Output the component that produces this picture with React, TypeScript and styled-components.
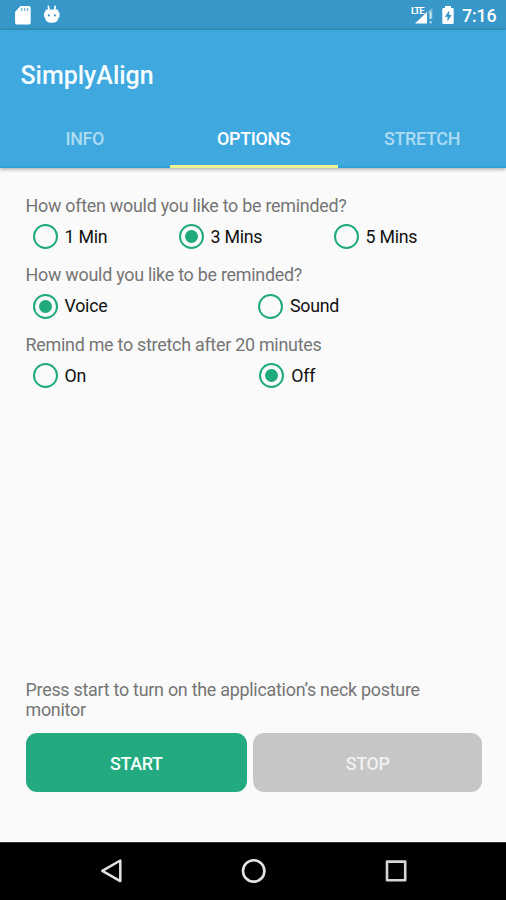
import React, { useState } from "react";
import styled, { createGlobalStyle } from "styled-components";

const GlobalStyle = createGlobalStyle`
  * { box-sizing: border-box; }
  body { margin: 0; font-family: Roboto, sans-serif; background: #fafafa; }
  button { font: inherit; border: 0; padding: 0; background: none; }
`;

const Screen = styled.div`
  width: 506px;
  height: 900px;
  display: flex;
  flex-direction: column;
  overflow: hidden;
  background: #fafafa;
`;

const StatusBar = styled.header`
  height: 30px;
  flex: none;
  display: flex;
  align-items: center;
  justify-content: space-between;
  padding: 0 9px 0 13px;
  background: #3697c8;
  color: #fff;
`;

const StatusIcons = styled.div`
  display: flex;
  align-items: center;
`;

const IconPair = styled(StatusIcons)`
  gap: 10px;
`;

const SignalGroup = styled.div`
  position: relative;
  width: 24px;
  height: 20px;
`;

const Lte = styled.span`
  position: absolute;
  left: 0;
  top: 1px;
  font-size: 9.5px;
  line-height: 9px;
  font-weight: 700;
  letter-spacing: -0.9px;
`;

const BatterySlot = styled.div`
  display: flex;
  margin-left: 6px;
`;

const Clock = styled.span`
  width: 35px;
  margin-left: 7px;
  padding-top: 2px;
  font-size: 17.8px;
  letter-spacing: -0.1px;
  line-height: 30px;
  font-weight: 500;
  white-space: nowrap;
`;

const AppBar = styled.div`
  height: 138px;
  flex: none;
  display: flex;
  flex-direction: column;
  justify-content: space-between;
  background: #3fa8df;
  box-shadow: 0 1px 4px rgba(0, 0, 0, 0.38);
`;

const Title = styled.h1`
  margin: 0;
  padding: 13px 0 0 20.5px;
  font-size: 25px;
  letter-spacing: -0.02px;
  line-height: 65px;
  font-weight: 500;
  color: #f5fcff;
`;

const Tabs = styled.nav`
  height: 59px;
  display: grid;
  grid-template-columns: 169.5px 168.5px 168px;
`;

const Tab = styled.button<{ $active: boolean }>`
  border-bottom: ${(p) => (p.$active ? "3px solid #edf394" : "2px solid #2ea1d8")};
  padding-top: ${(p) => (p.$active ? 3 : 2)}px;
  color: ${(p) => (p.$active ? "#fff" : "#addcf3")};
  font-size: 17.9px;
  letter-spacing: -0.33px;
  font-weight: 500;
`;

const Content = styled.main`
  flex: 1;
  display: flex;
  flex-direction: column;
  justify-content: space-between;
  padding: 28px 24px 50px 25.5px;
`;

const Group = styled.section`
  height: 69.4px;
`;

const Prompt = styled.p`
  margin: 0;
  font-size: 17.9px;
  letter-spacing: -0.26px;
  line-height: 20.2px;
  color: #757575;
`;

const Choices = styled.div<{ $columns: string }>`
  display: grid;
  grid-template-columns: ${(p) => p.$columns};
  height: 41.4px;
  padding-left: 7px;
  align-items: center;
`;

const Choice = styled.button`
  display: flex;
  align-items: center;
  gap: 7px;
  height: 26px;
  text-align: left;
  font-size: 17.8px;
  letter-spacing: -0.25px;
  line-height: 22px;
  color: #111;
`;

const Radio = styled.span<{ $checked: boolean }>`
  width: 25px;
  height: 25px;
  flex: none;
  border: 2.4px solid #1fa97c;
  border-radius: 50%;
  display: grid;
  place-items: center;

  &::after {
    content: "";
    width: 13px;
    height: 13px;
    border-radius: 50%;
    background: ${(p) => (p.$checked ? "#1fa97c" : "transparent")};
  }
`;

const Actions = styled.div`
  display: grid;
  grid-template-columns: 221.7px 228.8px;
  gap: 6px;
  margin-top: 13px;
`;

const ActionButton = styled.button<{ $primary?: boolean }>`
  height: 59px;
  border-radius: 11px;
  background: ${(p) => (p.$primary ? "#23aa81" : "#c6c6c6")};
  color: ${(p) => (p.$primary ? "#f4fffb" : "#f1f1f1")};
  font-size: 17.9px;
  letter-spacing: -0.35px;
  font-weight: 500;
  padding-top: 1px;
`;

const NavBar = styled.footer`
  height: 58px;
  flex: none;
  display: flex;
  justify-content: space-between;
  padding: 15px 97px 0 99px;
  background: #000;
  border-top: 1px solid #333;
`;

const SdCardIcon = () => (
  <svg width="19" height="20" viewBox="0 0 19 20">
    <path d="M7.5 1H16q1.700 0 1.700 1.700v15.100q0 1.700-1.700 1.700H3.800q-1.700 0-1.700-1.700V6.800Z" fill="#fff" />
    <path d="M8.600 3v3M11.600 3v3M14.600 3v3" stroke="#7bbbdc" strokeWidth="1.500" />
  </svg>
);

const DroidIcon = () => (
  <svg width="20" height="20" viewBox="0 0 20 20">
    <path d="M6.400 1.400 7 5M13.200 1.400 12.600 5" stroke="#fff" strokeWidth="1.700" strokeLinecap="round" />
    <path
      d="M4.600 4.400H15q1.200 0 1.200 1.200v1.200q1.300.2 1.300 1.400v3.200q0 1.100-1.100 1.300 0 5-6.600 5t-6.600-5Q2.100 12.500 2.100 11.400V8.200q0-1.200 1.300-1.400V5.600q0-1.200 1.200-1.200Z"
      fill="#fff"
    />
    <circle cx="6.800" cy="10.400" r="1.050" fill="#3697c8" />
    <circle cx="12.900" cy="10.400" r="1.050" fill="#3697c8" />
  </svg>
);

const SignalIcon = () => (
  <svg width="24" height="20" viewBox="0 0 24 20">
    <path d="M15.500 7.500 21.500 2.500v11h-3V7.500Z" fill="#fff" opacity=".3" />
    <path d="M4 18.500 16 7v11.500Z" fill="#fff" />
    <path d="M19.500 6.500v7.500M19.500 16v2.500" stroke="#fff" strokeWidth="2" opacity=".65" />
  </svg>
);

const BatteryIcon = () => (
  <svg width="14" height="20" viewBox="0 0 14 20">
    <path d="M4 1h6v2h1.500q1.200 0 1.200 1.200v13.600q0 1.200-1.200 1.200h-9q-1.200 0-1.200-1.200V4.200Q1.300 3 2.500 3H4Z" fill="#fff" />
    <path d="M8.200 5.500 3.800 11.800h2.700v4.700l4.200-6.400H8.200Z" fill="#3697c8" />
  </svg>
);

const questions = [
  {
    prompt: "How often would you like to be reminded?",
    options: ["1 Min", "3 Mins", "5 Mins"],
    columns: "146px 155px 1fr",
    initial: 1,
  },
  {
    prompt: "How would you like to be reminded?",
    options: ["Voice", "Sound"],
    columns: "225.5px 1fr",
    initial: 0,
  },
  {
    prompt: "Remind me to stretch after 20 minutes",
    options: ["On", "Off"],
    columns: "226.8px 1fr",
    initial: 1,
  },
];

function Question({ prompt, options, columns, initial }: (typeof questions)[number]) {
  const [selected, setSelected] = useState(initial);
  return (
    <Group>
      <Prompt>{prompt}</Prompt>
      <Choices $columns={columns} role="radiogroup">
        {options.map((label, i) => (
          <Choice key={label} role="radio" aria-checked={i === selected} onClick={() => setSelected(i)}>
            <Radio $checked={i === selected} />
            {label}
          </Choice>
        ))}
      </Choices>
    </Group>
  );
}

export default function App() {
  const [tab, setTab] = useState("OPTIONS");
  return (
    <Screen>
      <GlobalStyle />
      <StatusBar>
        <IconPair>
          <SdCardIcon />
          <DroidIcon />
        </IconPair>
        <StatusIcons>
          <SignalGroup>
            <SignalIcon />
            <Lte>LTE</Lte>
          </SignalGroup>
          <BatterySlot>
            <BatteryIcon />
          </BatterySlot>
          <Clock>7:16</Clock>
        </StatusIcons>
      </StatusBar>
      <AppBar>
        <Title>SimplyAlign</Title>
        <Tabs>
          {["INFO", "OPTIONS", "STRETCH"].map((name) => (
            <Tab key={name} $active={name === tab} onClick={() => setTab(name)}>
              {name}
            </Tab>
          ))}
        </Tabs>
      </AppBar>
      <Content>
        <div>
          {questions.map((q) => (
            <Question key={q.prompt} {...q} />
          ))}
        </div>
        <div>
          <Prompt>
            Press start to turn on the application’s neck posture
            <br />
            monitor
          </Prompt>
          <Actions>
            <ActionButton $primary>START</ActionButton>
            <ActionButton disabled>STOP</ActionButton>
          </Actions>
        </div>
      </Content>
      <NavBar>
        <svg width="26" height="26" viewBox="0 0 26 26" fill="none" stroke="#e3e3e3" strokeWidth="2.5" strokeLinejoin="round">
          <path d="M21.300 2.500v20.600L3.300 12.800Z" />
        </svg>
        <svg width="26" height="26" viewBox="0 0 26 26" fill="none" stroke="#e3e3e3" strokeWidth="2.6">
          <circle cx="12.700" cy="12.900" r="10.700" />
        </svg>
        <svg width="26" height="26" viewBox="0 0 26 26" fill="none" stroke="#d6d6d6" strokeWidth="2.6" strokeLinejoin="round">
          <rect x="4" y="3.600" width="18.200" height="18.600" />
        </svg>
      </NavBar>
    </Screen>
  );
}
